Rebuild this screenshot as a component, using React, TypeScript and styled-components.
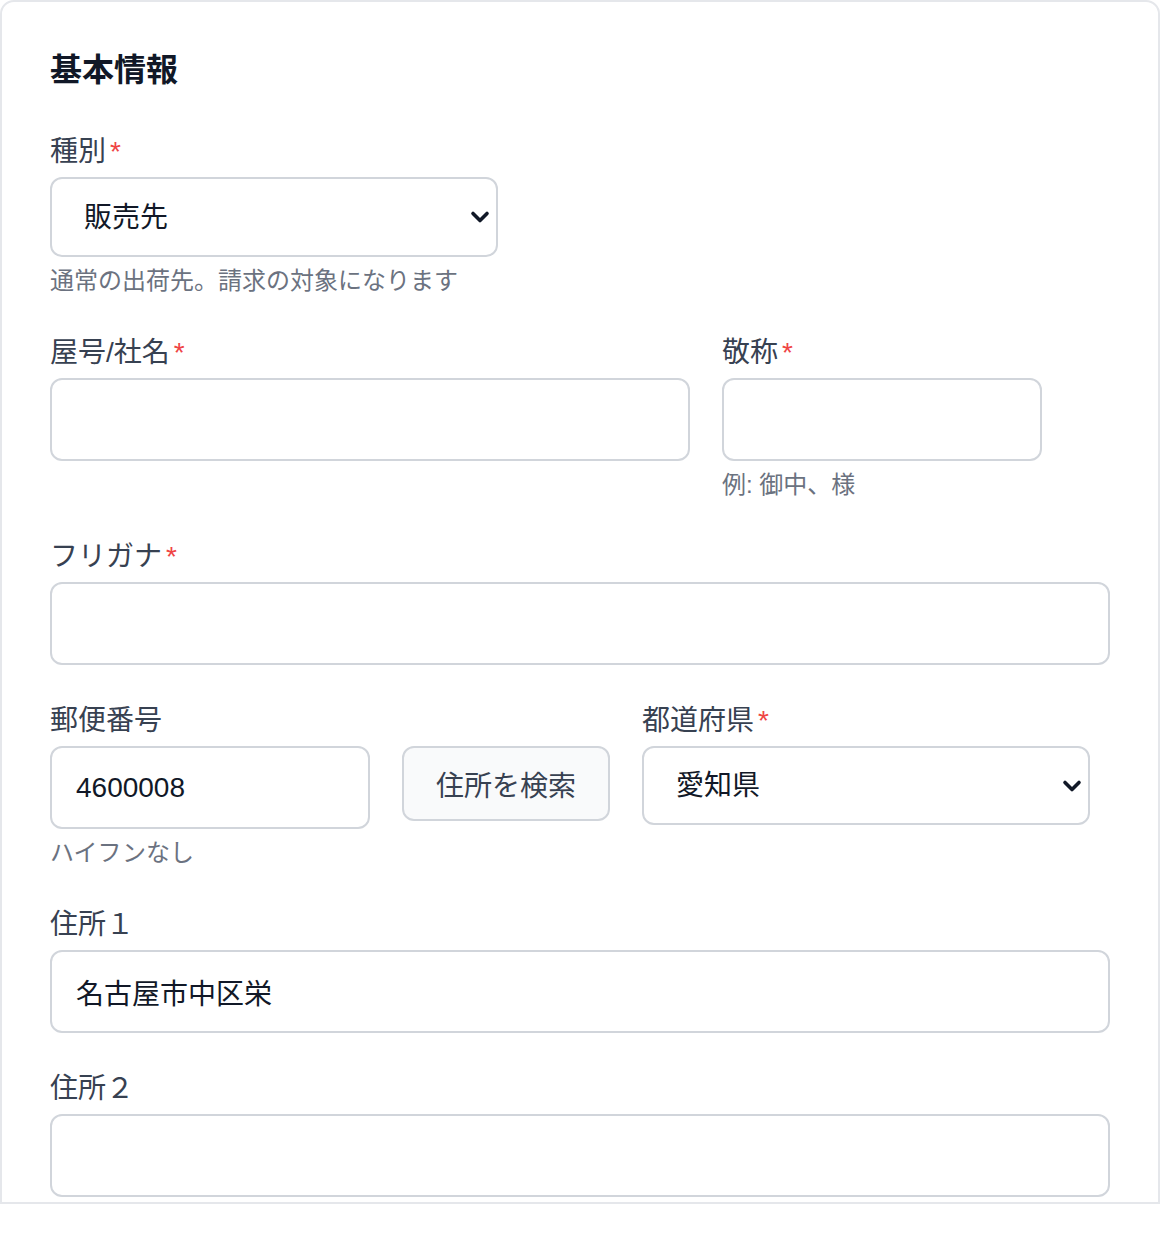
import styled, { createGlobalStyle } from "styled-components";

const GlobalStyle = createGlobalStyle`
  html, body {
    margin: 0;
    padding: 0;
    background: #ffffff;
  }
  body {
    font-family: "Liberation Sans", "Noto Sans CJK JP", sans-serif;
  }
  * {
    box-sizing: border-box;
  }
`;

const Card = styled.section`
  width: 1160px;
  height: 1204px;
  overflow: hidden;
  background: #ffffff;
  border: 2px solid #e5e7eb;
  border-radius: 14px 14px 0 0;
  padding: 44px 48px 0;
  display: flex;
  flex-direction: column;
  gap: 36px;
`;

const Title = styled.h2`
  margin: 0 0 2px;
  font-size: 32px;
  line-height: 48px;
  font-weight: 700;
  color: #111827;
`;

const Row = styled.div`
  display: flex;
  align-items: flex-start;
  gap: 32px;
`;

const Field = styled.div<{ $width?: number }>`
  display: flex;
  flex-direction: column;
  width: ${(p) => (p.$width ? `${p.$width}px` : "100%")};
  flex-shrink: 0;
`;

const Label = styled.label`
  font-size: 28px;
  line-height: 40px;
  color: #374151;
  margin-bottom: 5px;

  .req {
    color: #ef4444;
    margin-left: 4px;
  }
`;

const Input = styled.input`
  width: 100%;
  height: 83px;
  padding: 0 24px;
  border: 2px solid #d1d5db;
  border-radius: 12px;
  background: #ffffff;
  font-family: inherit;
  font-size: 28px;
  color: #111827;
  outline: none;
`;

const SelectWrap = styled.div`
  position: relative;
  width: 100%;

  svg {
    position: absolute;
    right: 8px;
    top: 50%;
    transform: translateY(-50%);
    pointer-events: none;
  }
`;

const Select = styled.select<{ $height: number }>`
  appearance: none;
  width: 100%;
  height: ${(p) => p.$height}px;
  padding: 0 40px 0 32px;
  border: 2px solid #d1d5db;
  border-radius: 12px;
  background: #ffffff;
  font-family: inherit;
  font-size: 28px;
  color: #111827;
  outline: none;
`;

const Hint = styled.p`
  margin: 8px 0 0;
  font-size: 24px;
  line-height: 32px;
  color: #6b7280;
`;

const Controls = styled.div`
  display: flex;
  align-items: flex-start;
  gap: 32px;
`;

const Button = styled.button`
  width: 208px;
  height: 75px;
  flex-shrink: 0;
  border: 2px solid #d1d5db;
  border-radius: 12px;
  background: #f9fafb;
  font-family: inherit;
  font-size: 28px;
  color: #374151;
  cursor: pointer;
`;

const Chevron = () => (
  <svg width="20" height="14" viewBox="0 0 20 14" fill="none">
    <path d="M3 3.5 L10 10.5 L17 3.5" stroke="#111827" strokeWidth="3.6" strokeLinecap="round" strokeLinejoin="round" />
  </svg>
);

function Req({ children }: { children: string }) {
  return (
    <Label>
      {children}
      <span className="req">*</span>
    </Label>
  );
}

export default function App() {
  return (
    <>
      <GlobalStyle />
      <Card>
        <Title>基本情報</Title>

        <Field $width={448}>
          <Req>種別</Req>
          <SelectWrap>
            <Select $height={80} defaultValue="販売先">
              <option>販売先</option>
              <option>仕入先</option>
            </Select>
            <Chevron />
          </SelectWrap>
          <Hint>通常の出荷先。請求の対象になります</Hint>
        </Field>

        <Row>
          <Field $width={640}>
            <Req>屋号/社名</Req>
            <Input />
          </Field>
          <Field $width={320}>
            <Req>敬称</Req>
            <Input />
            <Hint>例: 御中、様</Hint>
          </Field>
        </Row>

        <Field>
          <Req>フリガナ</Req>
          <Input />
        </Field>

        <Row>
          <Field $width={560}>
            <Label>郵便番号</Label>
            <Controls>
              <Field $width={320}>
                <Input defaultValue="4600008" />
              </Field>
              <Button>住所を検索</Button>
            </Controls>
            <Hint>ハイフンなし</Hint>
          </Field>
          <Field $width={448}>
            <Req>都道府県</Req>
            <SelectWrap>
              <Select $height={79} defaultValue="愛知県">
                <option>愛知県</option>
                <option>岐阜県</option>
                <option>三重県</option>
              </Select>
              <Chevron />
            </SelectWrap>
          </Field>
        </Row>

        <Field>
          <Label>住所１</Label>
          <Input defaultValue="名古屋市中区栄" />
        </Field>

        <Field>
          <Label>住所２</Label>
          <Input />
        </Field>
      </Card>
    </>
  );
}
